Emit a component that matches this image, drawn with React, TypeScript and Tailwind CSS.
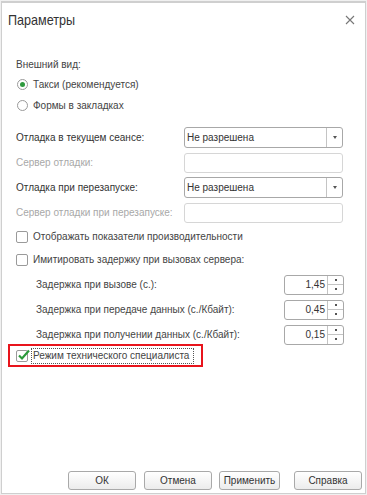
import React from "react";

const font = { fontFamily: '"Liberation Sans", Arial, sans-serif' };

function Radio({ checked, label }: { checked?: boolean; label: string }) {
  return (
    <div className="flex h-[21px] items-center">
      <span className="ml-[15px] flex h-[11px] w-[11px] items-center justify-center rounded-full border border-[#9a9a9a] bg-white">
        {checked && <span className="h-[5px] w-[5px] rounded-full bg-[#2f9a3f]" />}
      </span>
      <span className="ml-[5px] text-[10px] text-[#444]">{label}</span>
    </div>
  );
}

function Check({ label }: { label: string }) {
  return (
    <div className="flex h-[23px] items-center pl-[14px]">
      <span className="h-[12px] w-[12px] rounded-[2px] border border-[#9a9a9a] bg-white" />
      <span className="ml-[5px] whitespace-nowrap text-[10px] text-[#444]">{label}</span>
    </div>
  );
}

function Select({ value }: { value: string }) {
  return (
    <div className="flex h-[21px] w-[159px] rounded-[3px] border border-[#a8a8a8] bg-white">
      <span className="flex-1 pl-[2px] text-[10px] leading-[19px] text-[#333]">{value}</span>
      <span className="flex w-[16px] items-center justify-center border-l border-[#c4c4c4]">
        <span className="h-0 w-0 border-x-[2px] border-t-[3px] border-x-transparent border-t-[#555]" />
      </span>
    </div>
  );
}

function Input() {
  return <div className="h-[20px] w-[159px] rounded-[3px] border border-[#d6d6d6] bg-white" />;
}

function Row({ label, muted, children }: { label: string; muted?: boolean; children: React.ReactNode }) {
  return (
    <div className="flex h-[25px] items-center pl-[14px]">
      <span className={"w-[168px] whitespace-nowrap text-[10px] " + (muted ? "text-[#a8a8a8]" : "text-[#333]")}>
        {label}
      </span>
      {children}
    </div>
  );
}

function Spin({ label, value }: { label: string; value: string }) {
  return (
    <div className="flex h-[25px] items-center pl-[34px] pr-[21px]">
      <span className="flex-1 whitespace-nowrap text-[10px] text-[#444]">{label}</span>
      <div className="flex h-[20px] w-[60px] rounded-[3px] border border-[#a8a8a8] bg-white">
        <span className="flex-1 pr-[2px] text-right text-[10px] leading-[18px] text-[#333]">{value}</span>
        <span className="flex w-[16px] flex-col border-l border-[#c4c4c4]">
          <span className="flex flex-1 items-center justify-center border-b border-[#c4c4c4]">
            <span className="h-[2px] w-[2px] bg-[#555]" />
          </span>
          <span className="flex flex-1 items-center justify-center">
            <span className="h-[2px] w-[2px] bg-[#555]" />
          </span>
        </span>
      </div>
    </div>
  );
}

function Button({ label, w }: { label: string; w: string }) {
  return (
    <div
      className={
        "flex h-[19px] items-center justify-center rounded-[3px] border border-[#a9a9a9] bg-gradient-to-b from-white to-[#ececec] text-[10px] text-[#333] " +
        w
      }
    >
      {label}
    </div>
  );
}

export default function App() {
  return (
    <div className="h-[495px] w-[367px] bg-[#f0f0f0] p-[1px]" style={font}>
      <div className="flex h-full flex-col border border-t-2 border-[#cfcfcf] bg-white">
        {/* Title */}
        <div className="flex h-[34px] items-center justify-between pl-[6px] pr-[8px]">
          <span className="origin-left scale-x-[0.84] text-[15px] text-[#333]">Параметры</span>
          <svg width="10" height="10" viewBox="0 0 10 10" className="mr-[2px]">
            <path d="M1 1L9 9M9 1L1 9" stroke="#777" strokeWidth="1.1" />
          </svg>
        </div>

        <div className="mt-[17px] flex h-[20px] items-center pl-[14px] text-[10px] text-[#444]">Внешний вид:</div>
        <Radio checked label="Такси (рекомендуется)" />
        <Radio label="Формы в закладках" />

        <div className="mt-[9px] flex flex-col">
          <Row label="Отладка в текущем сеансе:">
            <Select value="Не разрешена" />
          </Row>
          <Row label="Сервер отладки:" muted>
            <Input />
          </Row>
          <Row label="Отладка при перезапуске:">
            <Select value="Не разрешена" />
          </Row>
          <Row label="Сервер отладки при перезапуске:" muted>
            <Input />
          </Row>
        </div>

        <div>
          <Check label="Отображать показатели производительности" />
          <Check label="Имитировать задержку при вызовах сервера:" />
        </div>

        <div className="mt-[1px]">
          <Spin label="Задержка при вызове (с.):" value="1,45" />
          <Spin label="Задержка при передаче данных (с./Кбайт):" value="0,45" />
          <Spin label="Задержка при получении данных (с./Кбайт):" value="0,15" />
        </div>

        {/* Highlighted option */}
        <div className="-mt-[3px] ml-[6px] flex h-[23px] w-[195px] items-center border-2 border-[#e8141c] pl-[6px]">
          <span className="relative h-[12px] w-[12px] shrink-0 rounded-[2px] border border-[#9a9a9a] bg-white">
            <svg width="14" height="12" viewBox="0 0 14 12" className="absolute left-[0px] top-[-2px]">
              <path d="M2 6.5L5 9.5L12 1.5" fill="none" stroke="#2b9a3a" strokeWidth="2.2" />
            </svg>
          </span>
          <span className="ml-[3px] whitespace-nowrap border border-dotted border-[#555] pl-[1px] pr-[4px] text-[10px] leading-[14px] text-[#444]">
            Режим технического специалиста
          </span>
        </div>

        <div className="flex-1" />

        <div className="mb-[3px] flex justify-end pr-[3px]">
          <Button label="ОК" w="w-[68px]" />
          <div className="w-[8px]" />
          <Button label="Отмена" w="w-[68px]" />
          <div className="w-[7px]" />
          <Button label="Применить" w="w-[61px]" />
          <div className="w-[14px]" />
          <Button label="Справка" w="w-[68px]" />
        </div>
      </div>
    </div>
  );
}
